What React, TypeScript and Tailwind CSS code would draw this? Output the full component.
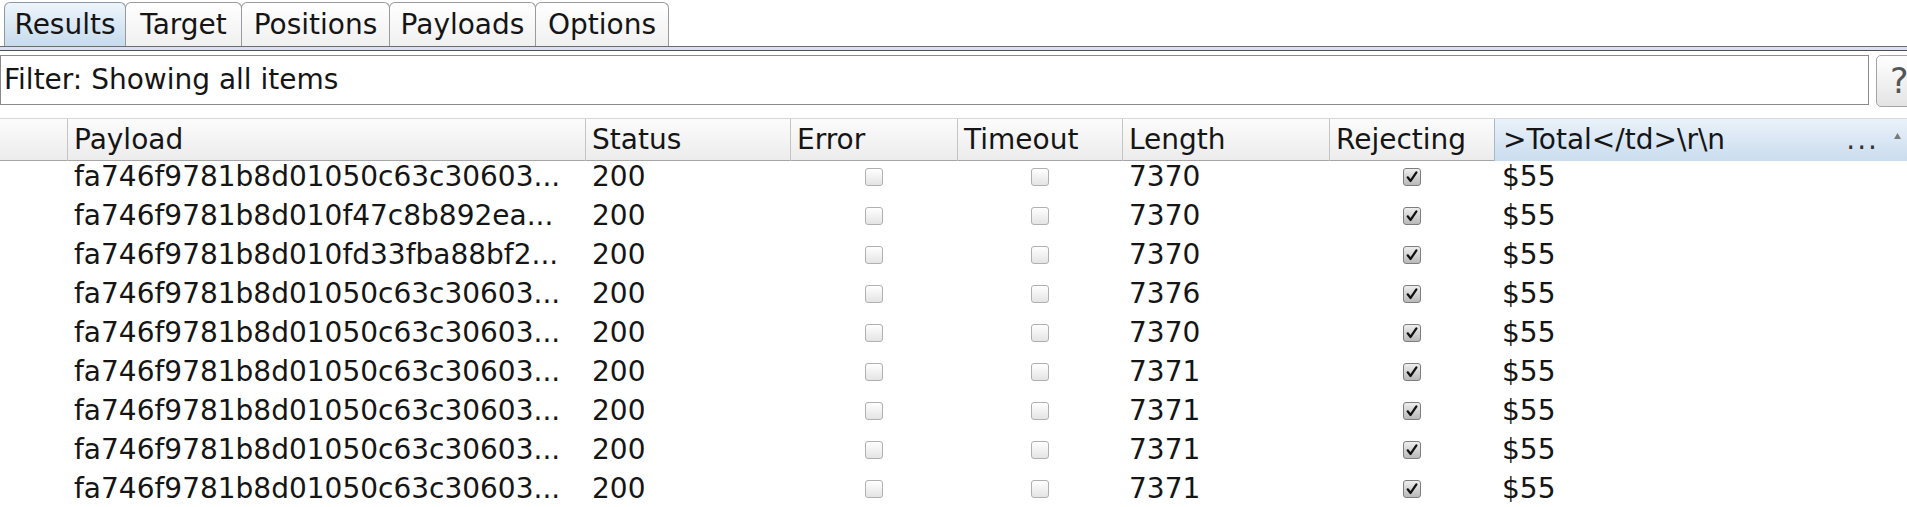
import React from "react";

const rows: [string, string][] = [
  ["fa746f9781b8d01050c63c30603...", "7370"],
  ["fa746f9781b8d010f47c8b892ea...", "7370"],
  ["fa746f9781b8d010fd33fba88bf2...", "7370"],
  ["fa746f9781b8d01050c63c30603...", "7376"],
  ["fa746f9781b8d01050c63c30603...", "7370"],
  ["fa746f9781b8d01050c63c30603...", "7371"],
  ["fa746f9781b8d01050c63c30603...", "7371"],
  ["fa746f9781b8d01050c63c30603...", "7371"],
  ["fa746f9781b8d01050c63c30603...", "7371"],
];

const tabs: [string, string][] = [
  ["Results", "w-[122px]"],
  ["Target", "w-[117px]"],
  ["Positions", "w-[149px]"],
  ["Payloads", "w-[147px]"],
  ["Options", "w-[134px]"],
];

function Box({ checked }: { checked?: boolean }) {
  if (checked) {
    return (
      <div className="w-[18px] h-[18px] rounded-[3px] border border-[#7e7e7e] bg-gradient-to-b from-[#eeeeee] to-[#b9b9b9] flex items-center justify-center">
        <svg width="14" height="14" viewBox="0 0 13 13">
          <path d="M2.5 6.8 L5.2 10.2 L10.6 2.2" fill="none" stroke="#111" strokeWidth="2.1" strokeLinecap="round" strokeLinejoin="round" />
        </svg>
      </div>
    );
  }
  return (
    <div className="w-[18px] h-[18px] rounded-[3px] border border-[#b0b0b0] bg-gradient-to-b from-[#ffffff] to-[#e4e4e4]" />
  );
}

const grid = "grid grid-cols-[67px_518px_205px_167px_165px_207px_165px_1fr]";

export default function App() {
  return (
    <div className="w-[1907px] h-[507px] overflow-hidden bg-white text-[#151515] font-['DejaVu_Sans',sans-serif] text-[28px]">
      {/* Tabs */}
      <div className="pt-[2px] pl-[4px] flex h-[46px]">
        {tabs.map(([t, w], i) => (
          <div
            key={t}
            className={
              w +
              " shrink-0 h-[44px] flex items-center justify-center border border-b-0 rounded-t-[6px] leading-none " +
              (i === 0
                ? "border-[#8c9aa8] bg-gradient-to-b from-[#eef5fb] to-[#c6dbed]"
                : "border-[#9a9a9a] bg-gradient-to-b from-[#ffffff] to-[#f0f0f0] -ml-[1px]")
            }
          >
            {t}
          </div>
        ))}
      </div>
      <div className="h-[5px] border-t border-[#6c6c6c] bg-[#dcdff0] border-b border-b-[#4f4f4f]" />

      {/* Filter */}
      <div className="mt-[4px] flex h-[52px] overflow-hidden">
        <div className="w-[1869px] shrink-0 h-[50px] border border-[#8a8a8a] flex items-center pl-[3px]">
          Filter: Showing all items
        </div>
        <div className="ml-[7px] w-[40px] shrink-0 h-[52px] rounded-[5px] border border-[#a4a4a4] bg-gradient-to-b from-[#ffffff] to-[#e4e4e4] flex items-center pl-[13px] text-[35px] text-[#555]">
          ?
        </div>
      </div>

      {/* Header */}
      <div className={grid + " mt-[11px] h-[43px] border-t border-[#d8d8d8] border-b border-b-[#a6a6a6] bg-gradient-to-b from-[#fcfcfc] to-[#ececec]"}>
        <div />
        {["Payload", "Status", "Error", "Timeout", "Length", "Rejecting"].map((h) => (
          <div key={h} className="border-l border-[#c4c4c4] pl-[6px] flex items-center whitespace-nowrap overflow-hidden">
            {h}
          </div>
        ))}
        <div className="border-l border-[#aab8c6] pl-[8px] pr-[6px] flex items-center bg-gradient-to-b from-[#eaf2fa] to-[#cadcee]">
          <span className="whitespace-nowrap">{">Total</td>\\r\\n"}</span>
          <span className="ml-auto text-[#333] tracking-[2px]">...</span>
          <svg className="ml-[15px] -mt-[8px]" width="7" height="6" viewBox="0 0 7 6">
            <polygon points="3.5,0 7,6 0,6" fill="#7a7a7a" />
          </svg>
        </div>
      </div>

      {/* Body */}
      <div className="h-[346px] overflow-hidden">
        <div className="-mt-[5px]">
          {rows.map(([p, len], i) => (
            <div key={i} className={grid + " h-[39px] items-center"}>
              <div />
              <div className="pl-[7px] whitespace-nowrap overflow-hidden">{p}</div>
              <div className="pl-[7px]">200</div>
              <div className="flex justify-center">
                <Box />
              </div>
              <div className="flex justify-center">
                <Box />
              </div>
              <div className="pl-[7px]">{len}</div>
              <div className="flex justify-center">
                <Box checked />
              </div>
              <div className="pl-[8px]">$55</div>
            </div>
          ))}
        </div>
      </div>
    </div>
  );
}
